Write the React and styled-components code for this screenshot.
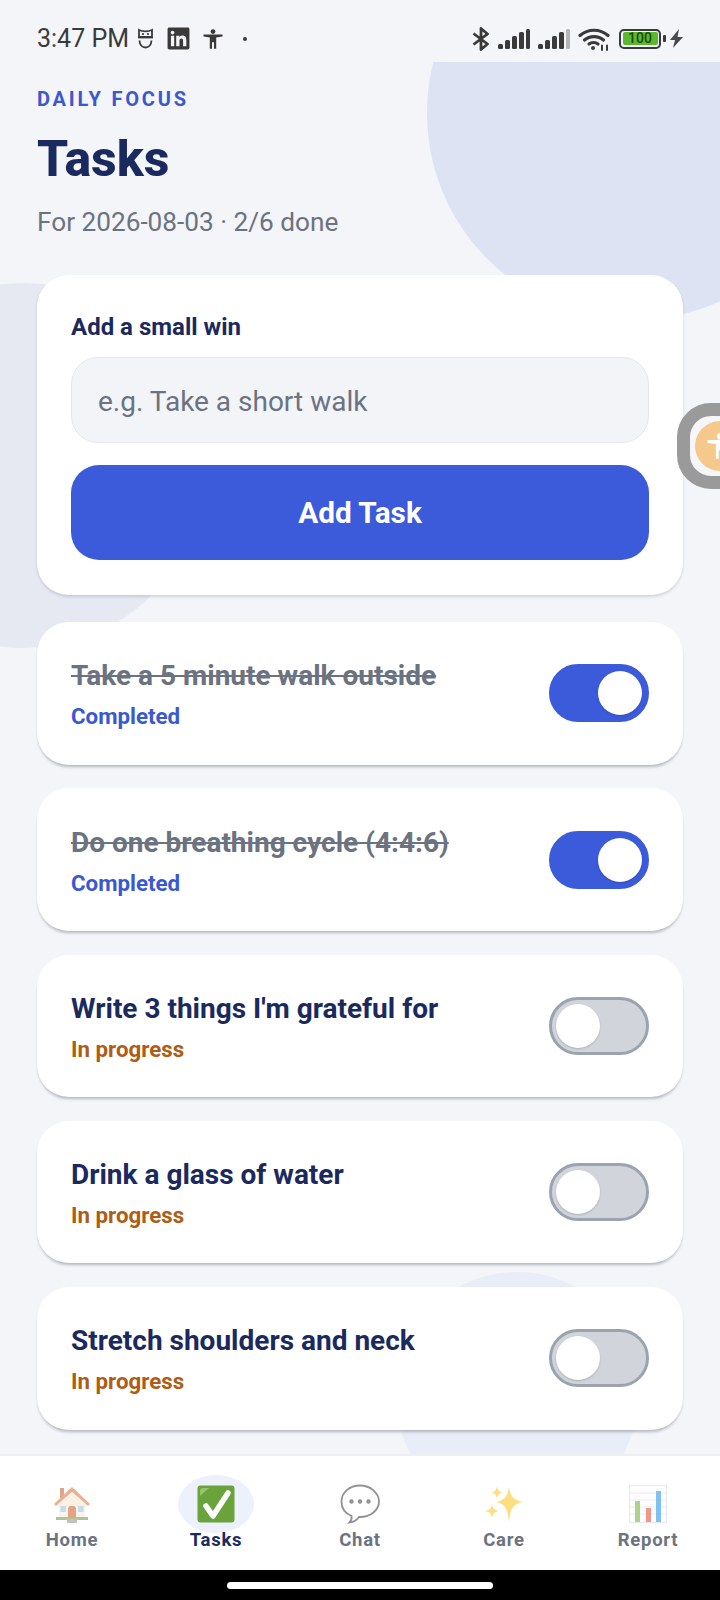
import React from 'react';
import styled, { createGlobalStyle } from 'styled-components';
import { FaLinkedin } from 'react-icons/fa';

const GlobalStyle = createGlobalStyle`
  html, body {
    margin: 0;
    padding: 0;
    background: #f3f5f9;
    font-family: Roboto, "Liberation Sans", sans-serif;
  }
`;

const Screen = styled.div`
  width: 720px;
  height: 1600px;
  display: flex;
  flex-direction: column;
  position: relative;
  overflow: hidden;
  background: #f3f5f9;
`;

const StatusBar = styled.div`
  height: 62px;
  flex: none;
  display: flex;
  align-items: center;
  justify-content: space-between;
  padding: 15px 37px 0;
  box-sizing: border-box;
  color: #3a3a3a;
  position: relative;
  z-index: 2;
  background: #f3f5f9;
`;

const StatusGroup = styled.div`
  display: flex;
  align-items: center;
`;

const Clock = styled.span`
  font-size: 25px;
  margin-right: 8px;
`;

const Main = styled.main`
  flex: 1;
  position: relative;
  overflow: hidden;
  padding: 0 37px;
`;

const Blob = styled.div`
  position: absolute;
  border-radius: 50%;
  left: ${(p) => p.$left}px;
  top: ${(p) => p.$top}px;
  width: ${(p) => p.$size}px;
  height: ${(p) => p.$size}px;
  background: ${(p) => p.$color};
`;

const Content = styled.div`
  position: relative;
`;

const Eyebrow = styled.div`
  margin-top: 25px;
  font-size: 20px;
  line-height: 24px;
  font-weight: 700;
  letter-spacing: 2.8px;
  color: #3a58d0;
`;

const Title = styled.h1`
  margin: 19px 0 0;
  font-size: 50px;
  line-height: 58px;
  font-weight: 800;
  color: #1b2a5e;
`;

const Subtitle = styled.div`
  margin-top: 18px;
  font-size: 26.2px;
  line-height: 32px;
  color: #6b7280;
`;

const Card = styled.div`
  background: #fff;
  border-radius: 32px;
`;

const AddCard = styled(Card)`
  margin-top: 37px;
  height: 320px;
  box-sizing: border-box;
  padding: 38px 34px 0;
  box-shadow: 0 2px 3px rgba(40, 50, 80, 0.16);
`;

const FieldLabel = styled.div`
  font-size: 24px;
  line-height: 28px;
  font-weight: 700;
  color: #1b2a5e;
`;

const Field = styled.div`
  margin-top: 16px;
  height: 86px;
  box-sizing: border-box;
  padding: 3px 26px 0;
  display: flex;
  align-items: center;
  border-radius: 27px;
  border: 1.5px solid #e5e7eb;
  background: #f3f4f8;
  font-size: 28px;
  color: #6b7280;
`;

const AddButton = styled.div`
  margin-top: 22px;
  height: 95px;
  display: flex;
  align-items: center;
  justify-content: center;
  border-radius: 28px;
  background: #3b5bdb;
  color: #fff;
  font-size: 29.800px;
  font-weight: 700;
`;

const TaskList = styled.div`
  margin-top: 27px;
  display: flex;
  flex-direction: column;
  gap: 23.8px;
`;

const TaskCard = styled(Card)`
  height: 142.5px;
  box-sizing: border-box;
  padding: 0 34px;
  display: flex;
  align-items: center;
  justify-content: space-between;
  box-shadow: 0 3px 3px -1px rgba(40, 45, 60, 0.3);
`;

const TaskText = styled.div`
  display: flex;
  flex-direction: column;
  gap: 10px;
  padding-top: 2px;
`;

const TaskTitle = styled.div`
  font-size: 28px;
  line-height: 34px;
  font-weight: 700;
  color: ${(p) => (p.$done ? '#6b7280' : '#1b2a5e')};
  text-decoration: ${(p) => (p.$done ? 'line-through' : 'none')};
`;

const TaskStatus = styled.div`
  font-size: 22.3px;
  line-height: 26px;
  font-weight: 700;
  color: ${(p) => (p.$done ? '#3a58d0' : '#b05c14')};
`;

const Track = styled.div`
  width: 100px;
  height: 58px;
  box-sizing: border-box;
  padding: 0 4px;
  display: flex;
  align-items: center;
  justify-content: ${(p) => (p.$on ? 'flex-end' : 'flex-start')};
  border-radius: 29px;
  border: 3px solid ${(p) => (p.$on ? '#3b5bdb' : '#9ca3af')};
  background: ${(p) => (p.$on ? '#3b5bdb' : '#d1d5db')};
`;

const Thumb = styled.div`
  width: 44px;
  height: 44px;
  border-radius: 50%;
  background: #fff;
  box-shadow: 0 1px 2px rgba(0, 0, 0, 0.18);
`;

const Nav = styled.nav`
  height: 116px;
  flex: none;
  box-sizing: border-box;
  padding-top: 19px;
  display: grid;
  grid-template-columns: repeat(5, 1fr);
  background: #fff;
  border-top: 2px solid #eceef3;
  position: relative;
  z-index: 2;
`;

const NavItem = styled.div`
  display: flex;
  flex-direction: column;
  align-items: center;
`;

const IconPill = styled.div`
  width: 76px;
  height: 58px;
  display: flex;
  align-items: center;
  justify-content: center;
  border-radius: 50%;
  background: ${(p) => (p.$active ? '#edf1fc' : 'transparent')};
  opacity: ${(p) => (p.$active ? 1 : 0.6)};
`;

const NavLabel = styled.div`
  margin-top: -4px;
  font-size: 18.5px;
  line-height: 22px;
  font-weight: 700;
  letter-spacing: 0.7px;
  color: ${(p) => (p.$active ? '#1b2a5e' : '#6b7280')};
`;

const GestureBar = styled.div`
  height: 30px;
  flex: none;
  display: flex;
  align-items: center;
  justify-content: center;
  background: #000;
  position: relative;
  z-index: 2;
`;

const GestureHandle = styled.div`
  width: 266px;
  height: 7px;
  border-radius: 4px;
  background: #fff;
`;

const FloatWidget = styled.div`
  position: absolute;
  left: 677px;
  top: 403px;
  width: 86px;
  height: 86px;
  box-sizing: border-box;
  border: 13px solid #9a9a9b;
  border-radius: 34px;
  background: #f6f6f8;
  z-index: 3;
  display: flex;
  align-items: center;
  padding-left: 5px;
`;

const FloatDot = styled.div`
  width: 50px;
  height: 50px;
  flex: none;
  border-radius: 50%;
  background: #f5c88c;
  display: flex;
  align-items: center;
  justify-content: center;
`;

const FacePic = () => (
  <svg width="17" height="21" viewBox="0 0 17 21" style={{ marginRight: 12 }} fill="none" stroke="#3a3a3a" strokeWidth="1.800">
    <path d="M2 2c2 1 4 1.400 6.500 1.400S13 3 15 2v7H2z" />
    <path d="M1 9.500h15" />
    <path d="M2.500 12.500c.2 4.500 2.800 7 6 7s5.800-2.500 6-7" />
    <circle cx="6" cy="6" r="1.100" fill="#3a3a3a" stroke="none" />
    <circle cx="11" cy="6" r="1.100" fill="#3a3a3a" stroke="none" />
  </svg>
);

const PersonPic = ({ color = '#3a3a3a', size = 20 }) => (
  <svg width={size} height={size} viewBox="0 0 20 20" fill={color}>
    <circle cx="10" cy="2.600" r="2.400" />
    <path d="M0.500 5.400h19v2.200l-6.300.9v11.300h-2.200v-6.600H9v6.600H6.800V8.500L.5 7.600z" />
  </svg>
);

const BluetoothPic = () => (
  <svg width="18" height="24" viewBox="0 0 18 24" style={{ marginRight: 8 }} fill="none" stroke="#3a3a3a" strokeWidth="2.800" strokeLinejoin="round">
    <path d="M1.500 6.500 15.500 17 9 22.500V1.500L15.500 7 1.500 17.500" />
  </svg>
);

const SignalPic = ({ last = '#3a3a3a', right = 8 }) => (
  <svg width="32" height="20" viewBox="0 0 32 20" style={{ marginRight: right }} fill="#3a3a3a">
    <rect x="0" y="15" width="5" height="5" rx="1.500" />
    <rect x="7" y="11" width="5" height="9" rx="1.500" />
    <rect x="14" y="7" width="5" height="13" rx="1.500" />
    <rect x="21" y="3" width="5" height="17" rx="1.500" />
    <rect x="28" y="0" width="4" height="20" rx="1.500" fill={last} />
  </svg>
);

const WifiPic = () => (
  <svg width="32" height="24" viewBox="0 0 32 24" style={{ marginRight: 9 }} fill="none" stroke="#3a3a3a" strokeWidth="3.200" strokeLinecap="round">
    <path d="M2 8.500c8-7 20-7 28 0" />
    <path d="M6.500 13c5.200-4.600 13.800-4.600 19 0" />
    <path d="M11 17c2.500-2 6.500-2 9 0" />
    <circle cx="15" cy="21" r="2" fill="#3a3a3a" stroke="none" />
    <path d="M24 18.500v4.500M29 18.500v4.500" strokeWidth="2" />
  </svg>
);

const BatteryShell = styled.div`
  width: 42px;
  height: 20px;
  box-sizing: border-box;
  border: 2px solid #3a3a3a;
  border-radius: 5px;
  padding: 1.500px;
  display: flex;
`;

const BatteryFill = styled.div`
  flex: 1;
  background: #5cb82e;
  border-radius: 2px;
  font-size: 14px;
  line-height: 13px;
  font-weight: 500;
  text-align: center;
  color: #1d4a10;
`;

const BatteryNub = styled.div`
  width: 3px;
  height: 7px;
  margin: 0 4px 0 2px;
  border-radius: 1px;
  background: #3a3a3a;
`;

const BoltPic = () => (
  <svg width="13" height="19" viewBox="0 0 13 19" fill="#4a4a4a">
    <path d="M9 0 0 11h5l-2 8 10-11H7.500z" />
  </svg>
);

const StatusDot = styled.span`
  width: 4px;
  height: 4px;
  margin-left: 20px;
  border-radius: 50%;
  background: #3a3a3a;
`;

const HomePic = () => (
  <svg width="38" height="38" viewBox="0 0 38 38">
    <rect x="7" y="3" width="4" height="10" fill="#c96a3c" />
    <rect x="6" y="16" width="26" height="17" fill="#f4ede0" />
    <path d="M19 2 1 19l2 2L19 7l16 14 2-2z" fill="#dd7b4a" />
    <path d="M19 7 5 19v3h28v-3z" fill="#f6e8d2" />
    <rect x="15" y="21" width="8" height="13" rx="3" fill="#d8643c" />
    <rect x="7.500" y="21" width="5.500" height="6" fill="#9cc4e4" />
    <rect x="25" y="21" width="5.500" height="6" fill="#9cc4e4" />
    <rect x="3" y="32" width="32" height="3" fill="#7d9c4a" />
    <rect x="14" y="34" width="10" height="4" fill="#9a9a9a" />
  </svg>
);

const CheckPic = () => (
  <svg width="38" height="38" viewBox="0 0 38 38">
    <rect x="0.500" y="0.500" width="37" height="37" rx="3" fill="#6aa33c" />
    <path d="M3 11V6c0-2 1-3 3-3h6L3 11z" fill="#94c46c" />
    <path d="M9 21l7 10L31 8" fill="none" stroke="#fff" strokeWidth="5.500" strokeLinecap="round" strokeLinejoin="round" />
  </svg>
);

const ChatPic = () => (
  <svg width="40" height="40" viewBox="0 0 40 40" fill="none" stroke="#4a4a4a" strokeWidth="1.800">
    <path d="M20 1.500C9.500 1.500 1.500 8.500 1.500 17.500c0 6.500 4 12 10 14.500.5 2.500-.5 5-2 6.500 4-.5 7.500-2.500 9.500-5.500h1c10.500 0 19-7 19-15.500S30.500 1.500 20 1.500z" />
    <circle cx="11.500" cy="17.500" r="2.200" fill="#4a4a4a" stroke="none" />
    <circle cx="20" cy="17.500" r="2.200" fill="#4a4a4a" stroke="none" />
    <circle cx="28.500" cy="17.500" r="2.200" fill="#4a4a4a" stroke="none" />
  </svg>
);

const SparklesPic = () => (
  <svg width="38" height="38" viewBox="0 0 38 38" fill="#fbc92e">
    <path d="M24 2c1.500 9 4 13 14 15-10 2-12.500 6-14 20-1.500-14-4-18-13-20 9-2 11.500-6 13-15z" />
    <path d="M12 1c.6 4 1.800 5.500 5 6.500-3.200 1-4.400 2.500-5 6.500-.6-4-1.800-5.500-5-6.500 3.200-1 4.400-2.500 5-6.500z" />
    <path d="M7 19c.7 4.500 2 6 7 7-5 1-6.300 2.500-7 7-.7-4.500-2-6-7-7 5-1 6.300-2.500 7-7z" />
  </svg>
);

const ChartPic = () => (
  <svg width="38" height="38" viewBox="0 0 38 38">
    <rect x="0.500" y="0.500" width="37" height="37" fill="#fdfdfd" stroke="#d8dbe0" />
    <path d="M1 8h36M1 15h36M1 22h36M1 29h36" stroke="#dfe2e7" strokeWidth="1" />
    <rect x="6" y="16" width="5" height="21" fill="#7cb342" />
    <rect x="17" y="23" width="5" height="14" fill="#e8503c" />
    <rect x="27" y="6" width="5" height="31" fill="#2b98e8" />
  </svg>
);

const tasks = [
  { title: 'Take a 5 minute walk outside', done: true },
  { title: 'Do one breathing cycle (4:4:6)', done: true },
  { title: "Write 3 things I'm grateful for", done: false },
  { title: 'Drink a glass of water', done: false },
  { title: 'Stretch shoulders and neck', done: false },
];

const navItems = [
  { label: 'Home', Pic: HomePic },
  { label: 'Tasks', Pic: CheckPic, active: true },
  { label: 'Chat', Pic: ChatPic },
  { label: 'Care', Pic: SparklesPic },
  { label: 'Report', Pic: ChartPic },
];

export default function App() {
  return (
    <Screen>
      <GlobalStyle />
      <StatusBar>
        <StatusGroup>
          <Clock>3:47 PM</Clock>
          <FacePic />
          <FaLinkedin size={25} color="#3a3a3a" style={{ marginRight: 12 }} />
          <PersonPic />
          <StatusDot />
        </StatusGroup>
        <StatusGroup>
          <BluetoothPic />
          <SignalPic />
          <SignalPic last="#b5b5b5" />
          <WifiPic />
          <BatteryShell>
            <BatteryFill>100</BatteryFill>
          </BatteryShell>
          <BatteryNub />
          <BoltPic />
        </StatusGroup>
      </StatusBar>

      <Main>
        <Blob $left={427} $top={-156} $size={414} $color="#dee3f3" />
        <Blob $left={-159} $top={221} $size={365} $color="#e6e9f2" />
        <Blob $left={395} $top={1210} $size={244} $color="#e9edf7" />
        <Content>
          <Eyebrow>DAILY FOCUS</Eyebrow>
          <Title>Tasks</Title>
          <Subtitle>For 2026-08-03 · 2/6 done</Subtitle>

          <AddCard>
            <FieldLabel>Add a small win</FieldLabel>
            <Field>e.g. Take a short walk</Field>
            <AddButton>Add Task</AddButton>
          </AddCard>

          <TaskList>
            {tasks.map((task) => (
              <TaskCard key={task.title}>
                <TaskText>
                  <TaskTitle $done={task.done}>{task.title}</TaskTitle>
                  <TaskStatus $done={task.done}>{task.done ? 'Completed' : 'In progress'}</TaskStatus>
                </TaskText>
                <Track $on={task.done}>
                  <Thumb />
                </Track>
              </TaskCard>
            ))}
          </TaskList>
        </Content>
      </Main>

      <Nav>
        {navItems.map(({ label, Pic, active }) => (
          <NavItem key={label}>
            <IconPill $active={active}>
              <Pic />
            </IconPill>
            <NavLabel $active={active}>{label}</NavLabel>
          </NavItem>
        ))}
      </Nav>
      <GestureBar>
        <GestureHandle />
      </GestureBar>

      <FloatWidget>
        <FloatDot>
          <PersonPic color="#fff" size={26} />
        </FloatDot>
      </FloatWidget>
    </Screen>
  );
}
